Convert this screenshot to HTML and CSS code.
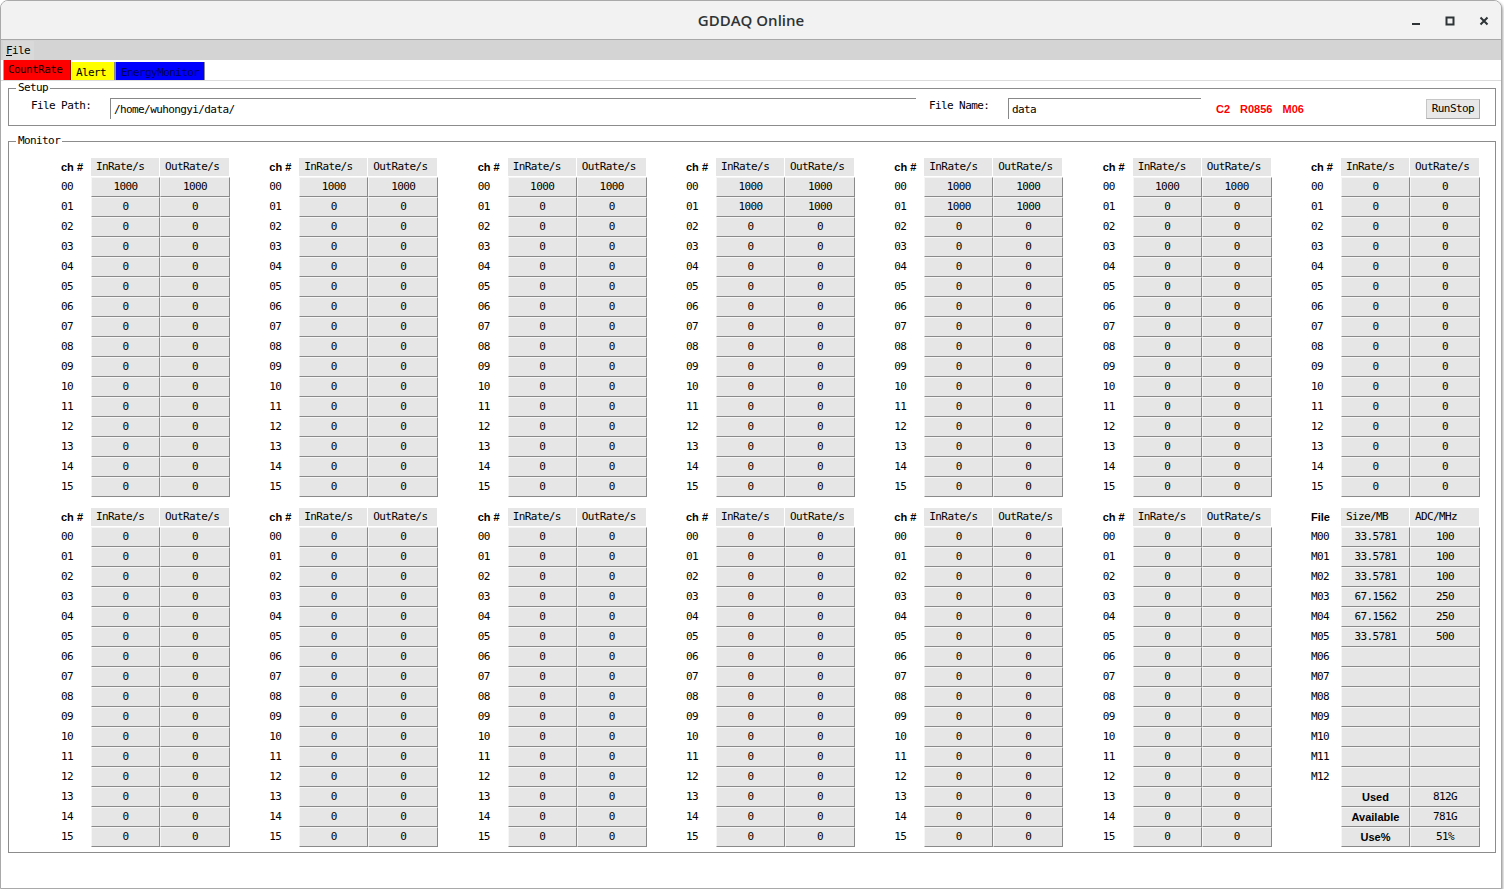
FILE: index.html
```html
<!DOCTYPE html>
<html lang="en">
<head>
  <meta charset="UTF-8">
  <title>GDDAQ Online</title>
  <link rel="stylesheet" href="styles.css">
</head>
<body>
  <div class="window">
    <div class="titlebar">
      <span></span>
      <span class="title">GDDAQ Online</span>
      <span class="controls">
        <svg width="10" height="10" viewBox="0 0 10 10"><rect x="1" y="7" width="8" height="2" fill="#2e3436"/></svg>
        <svg width="10" height="10" viewBox="0 0 10 10"><rect x="1.5" y="1.5" width="7" height="7" fill="none" stroke="#2e3436" stroke-width="2"/></svg>
        <svg width="10" height="10" viewBox="0 0 10 10"><path d="M1.5 1.5 L8.5 8.5 M8.5 1.5 L1.5 8.5" stroke="#2e3436" stroke-width="2"/></svg>
      </span>
    </div>

    <div class="menubar">
      <span class="menu-item"><u>F</u>ile</span>
    </div>

    <div class="tabs">
      <span class="tab tab-count">CountRate</span>
      <span class="tab tab-alert">Alert</span>
      <span class="tab tab-energy">EnergyMonitor</span>
    </div>

    <fieldset class="setup">
      <legend>Setup</legend>
      <div class="setup-row">
        <label class="field-label">File Path:</label>
        <input class="entry entry-path" type="text" value="/home/wuhongyi/data/">
        <label class="field-label">File Name:</label>
        <input class="entry entry-name" type="text" value="data">
        <span class="run-info first">C2</span>
        <span class="run-info">R0856</span>
        <span class="run-info">M06</span>
        <button class="btn">RunStop</button>
      </div>
    </fieldset>

    <fieldset class="monitor">
      <legend>Monitor</legend>
      <div class="grid" id="grid"></div>
    </fieldset>
  </div>

  <script>
    const grid = document.getElementById("grid");
    // number of channels at 1000 in each board
    const hot = [1, 1, 1, 2, 2, 1, 0, 0, 0, 0, 0, 0, 0];

    function pad(i) {
      return String(i).padStart(2, "0");
    }

    function rateGroup(n) {
      let html = `<div class="group">
        <span class="ch-head">ch #</span>
        <span class="head">InRate/s</span>
        <span class="head">OutRate/s</span>`;
      for (let i = 0; i < 16; i++) {
        const v = i < n ? 1000 : 0;
        html += `<span class="ch">${pad(i)}</span><span class="cell">${v}</span><span class="cell">${v}</span>`;
      }
      return html + `</div>`;
    }

    function fileGroup() {
      const files = [
        ["33.5781", "100"], ["33.5781", "100"], ["33.5781", "100"],
        ["67.1562", "250"], ["67.1562", "250"], ["33.5781", "500"]
      ];
      let html = `<div class="group">
        <span class="ch-head">File</span>
        <span class="head">Size/MB</span>
        <span class="head">ADC/MHz</span>`;
      for (let i = 0; i < 13; i++) {
        const f = files[i] || ["", ""];
        html += `<span class="ch">M${pad(i)}</span><span class="cell">${f[0]}</span><span class="cell">${f[1]}</span>`;
      }
      const disk = [["Used", "812G"], ["Available", "781G"], ["Use%", "51%"]];
      disk.forEach(d => {
        html += `<span class="ch"></span><span class="cell bold">${d[0]}</span><span class="cell">${d[1]}</span>`;
      });
      return html + `</div>`;
    }

    let out = "";
    hot.forEach(n => { out += rateGroup(n); });
    out += fileGroup();
    grid.innerHTML = out;
  </script>
</body>
</html>
```

FILE: styles.css
```css
body {
  margin: 0;
  background: #fff;
  font-family: "DejaVu Sans Mono", monospace;
  font-size: 11px;
  letter-spacing: -0.6px;
  color: #000;
}
.window {
  width: 1502px;
  height: 889px;
  box-sizing: border-box;
  border: 1px solid #a9a9a9;
  border-radius: 8px 8px 0 0;
  background: #fff;
  box-shadow: 1px 2px 3px rgba(0, 0, 0, 0.35);
  overflow: hidden;
}
.titlebar {
  height: 38px;
  background: #f2f2f2;
  border-bottom: 1px solid #a8a8a8;
  display: grid;
  grid-template-columns: 1fr auto 1fr;
  align-items: center;
}
.title {
  font-family: "Open Sans", "Noto Sans", sans-serif;
  font-size: 15px;
  font-weight: 600;
  letter-spacing: 0;
  color: #2e3436;
}
.controls {
  justify-self: end;
  display: flex;
  gap: 24px;
  padding-right: 12px;
  padding-top: 1px;
}
.controls svg {
  display: block;
}
.menubar {
  height: 20px;
  background: #d4d4d4;
  display: flex;
  padding-left: 2px;
}
.menu-item {
  line-height: 19px;
  padding: 0 3px 0 3px;
  margin-top: 1px;
  background: #d9d9d9;
  width: 25px;
}
.tabs {
  height: 20px;
  display: flex;
  align-items: flex-end;
  padding-left: 2px;
  border-bottom: 1px solid #dcdcdc;
}
.tab {
  height: 18px;
  line-height: 19px;
  padding-left: 4px;
  box-sizing: border-box;
  border-left: 1px solid #f0f0f0;
  border-right: 1px solid #8a8a8a;
}
.tab-count {
  height: 20px;
  line-height: 19px;
  width: 68px;
  background: #ff0000;
  border-left-color: #ff8080;
  border-right-color: #a00000;
}
.tab-alert {
  width: 44px;
  background: #ffff00;
  line-height: 21px;
}
.tab-energy {
  width: 90px;
  background: #0000ff;
  color: #00005a;
  padding-left: 5px;
  line-height: 21px;
  border-left-color: #8080ff;
}
fieldset {
  margin: 0;
  border: 1px solid #8c8c8c;
  min-width: 0;
}
legend {
  padding: 0 2px;
  line-height: 12px;
}
.setup {
  margin: 1px 5px 0 7px;
  padding: 4px 15px 6px 22px;
}
.setup legend {
  margin-left: -15px;
}
.setup-row {
  display: flex;
  align-items: center;
}
.field-label {
  width: 79px;
  align-self: flex-start;
  line-height: 16px;
}
.entry {
  height: 21px;
  box-sizing: border-box;
  border: none;
  border-top: 1px solid #888;
  border-left: 1px solid #888;
  padding: 1px 0 0 3px;
  margin: 0 13px 0 0;
  font-family: "DejaVu Sans Mono", monospace;
  font-size: 11px;
  letter-spacing: -0.6px;
  background: #fff;
  outline: none;
}
.entry-path {
  width: 806px;
}
.entry-name {
  width: 193px;
  margin-right: 0;
}
.run-info {
  font-family: "Liberation Sans", Arial, sans-serif;
  font-weight: bold;
  letter-spacing: 0;
  color: #ff0000;
  margin-left: 10px;
  padding-top: 1px;
}
.run-info.first {
  margin-left: 15px;
}
.btn {
  margin-left: auto;
  height: 20px;
  padding: 0 5px;
  background: #e8e8e8;
  border: 1px solid #c6c6c6;
  border-right-color: #a8a8a8;
  border-bottom-color: #a8a8a8;
  font-family: "DejaVu Sans Mono", monospace;
  font-size: 11px;
  letter-spacing: -0.6px;
  color: #000;
}
.monitor {
  margin: 9px 5px 0 7px;
  padding: 11px 0 5px 52px;
}
.monitor legend {
  margin-left: -45px;
}
.grid {
  display: grid;
  grid-template-columns: repeat(7, 169px);
  column-gap: 39.33px;
  row-gap: 11px;
}
.group {
  display: grid;
  grid-template-columns: 30px 69px 70px;
  grid-template-rows: 19px;
  grid-auto-rows: 20px;
}
.ch-head {
  font-family: "Liberation Sans", Arial, sans-serif;
  font-weight: bold;
  letter-spacing: 0;
  line-height: 18px;
}
.head {
  background: #e6e6e6;
  height: 18px;
  line-height: 18px;
  padding-left: 5px;
  margin-right: 1px;
}
.ch {
  line-height: 20px;
}
.cell {
  background: #e6e6e6;
  box-sizing: border-box;
  border: 1px solid #f6f6f6;
  border-right-color: #8a8a8a;
  border-bottom-color: #8a8a8a;
  text-align: center;
  line-height: 18px;
}
.bold {
  font-family: "Liberation Sans", Arial, sans-serif;
  font-weight: bold;
  letter-spacing: 0;
}
```
